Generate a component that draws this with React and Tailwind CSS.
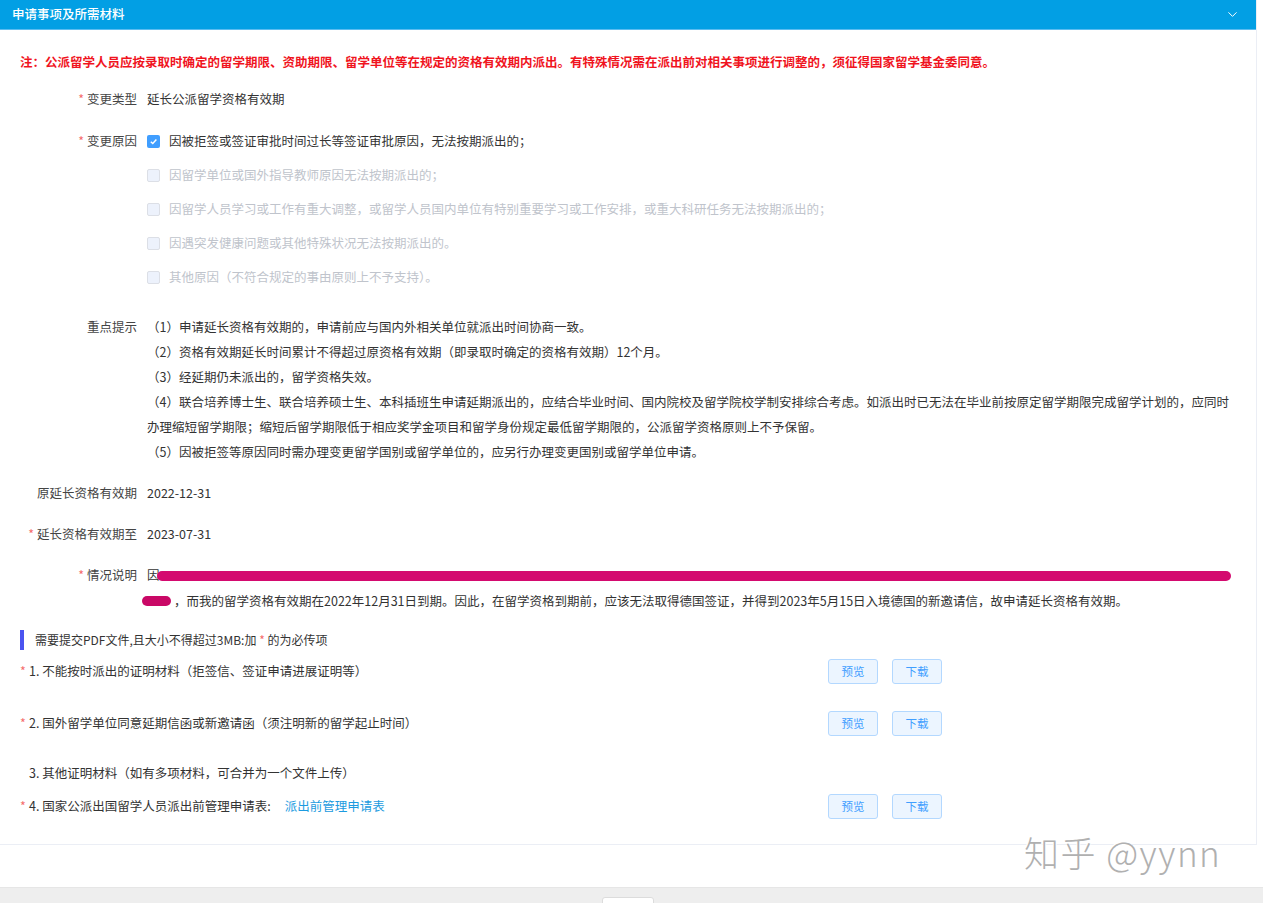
import React from "react";
import { ChevronDown } from "lucide-react";

const font = { fontFamily: '"Noto Sans CJK SC", "Noto Sans", sans-serif' };

const Star = () => <span className="text-[#f56c6c] mr-[3px]">*</span>;

const reasons = [
  { text: "因被拒签或签证审批时间过长等签证审批原因，无法按期派出的；", checked: true },
  { text: "因留学单位或国外指导教师原因无法按期派出的；" },
  { text: "因留学人员学习或工作有重大调整，或留学人员国内单位有特别重要学习或工作安排，或重大科研任务无法按期派出的；" },
  { text: "因遇突发健康问题或其他特殊状况无法按期派出的。" },
  { text: "其他原因（不符合规定的事由原则上不予支持）。" },
];

const tips = [
  "（1）申请延长资格有效期的，申请前应与国内外相关单位就派出时间协商一致。",
  "（2）资格有效期延长时间累计不得超过原资格有效期（即录取时确定的资格有效期）12个月。",
  "（3）经延期仍未派出的，留学资格失效。",
  "（4）联合培养博士生、联合培养硕士生、本科插班生申请延期派出的，应结合毕业时间、国内院校及留学院校学制安排综合考虑。如派出时已无法在毕业前按原定留学期限完成留学计划的，应同时办理缩短留学期限；缩短后留学期限低于相应奖学金项目和留学身份规定最低留学期限的，公派留学资格原则上不予保留。",
  "（5）因被拒签等原因同时需办理变更留学国别或留学单位的，应另行办理变更国别或留学单位申请。",
];

const Label = ({ required, children }) => (
  <div className="w-[137px] shrink-0 text-right text-[#444]">
    {required && <Star />}
    {children}
  </div>
);

const Checkbox = ({ checked }) =>
  checked ? (
    <span className="w-[13px] h-[13px] rounded-[2px] bg-[#409eff] flex items-center justify-center shrink-0">
      <svg width="9" height="9" viewBox="0 0 10 10">
        <path d="M2 5.2 L4.2 7.3 L8.2 2.8" fill="none" stroke="white" strokeWidth="1.6" />
      </svg>
    </span>
  ) : (
    <span className="w-[13px] h-[13px] rounded-[2px] bg-[#edf2fc] border border-[#dcdfe6] shrink-0" />
  );

const FileButtons = () => (
  <div className="flex gap-[14px]">
    {["预览", "下载"].map((t) => (
      <button
        key={t}
        className="w-[50px] h-[25px] rounded-[3px] bg-[#ecf5ff] border border-[#b3d8ff] text-[#409eff] text-[11.5px]"
      >
        {t}
      </button>
    ))}
  </div>
);

const files = [
  { required: true, text: "1. 不能按时派出的证明材料（拒签信、签证申请进展证明等）", buttons: true, mt: "mt-[9px]" },
  { required: true, text: "2. 国外留学单位同意延期信函或新邀请函（须注明新的留学起止时间）", buttons: true, mt: "mt-[27px]" },
  { required: false, text: "3. 其他证明材料（如有多项材料，可合并为一个文件上传）", mt: "mt-[25px]" },
  { required: true, text: "4. 国家公派出国留学人员派出前管理申请表:", link: "派出前管理申请表", buttons: true, mt: "mt-[8px]" },
];

export default function App() {
  return (
    <div className="relative w-[1263px] bg-white text-[12.5px] text-[#333]" style={font}>
      <div className="w-[1257px] border-r border-b border-[#ebeef5]">
        {/* Header */}
        <div className="h-[30px] bg-[#029fe4] flex items-center justify-between pl-[12px] pr-[16px] border-b border-[#5bbcf0]">
          <span className="text-white text-[12.5px] font-medium">申请事项及所需材料</span>
          <ChevronDown size={15} className="text-white" strokeWidth={1.6} />
        </div>

        <div className="pl-[20px] pr-[24px] pt-[22px] pb-[25px]">
          <div className="h-[20px] leading-[20px] text-[#f0141e] font-semibold text-[12.5px]">
            注：公派留学人员应按录取时确定的留学期限、资助期限、留学单位等在规定的资格有效期内派出。有特殊情况需在派出前对相关事项进行调整的，须征得国家留学基金委同意。
          </div>

          <div className="-ml-[20px]">
            {/* 变更类型 */}
            <div className="mt-[10px] h-[34px] flex items-center gap-[10px]">
              <Label required>变更类型</Label>
              <span>延长公派留学资格有效期</span>
            </div>

            {/* 变更原因 */}
            <div className="mt-[8px] flex gap-[10px]">
              <div className="h-[34px] flex items-center">
                <Label required>变更原因</Label>
              </div>
              <div>
                {reasons.map((r, i) => (
                  <div key={i} className="h-[34px] flex items-center gap-[9px]">
                    <Checkbox checked={r.checked} />
                    <span className={r.checked ? "text-[#333]" : "text-[#c0c4cc]"}>{r.text}</span>
                  </div>
                ))}
              </div>
            </div>

            {/* 重点提示 */}
            <div className="mt-[20px] flex gap-[10px] leading-[25px]">
              <Label>重点提示</Label>
              <div className="w-[1086px]">
                {tips.map((t, i) => (
                  <div key={i}>{t}</div>
                ))}
              </div>
            </div>

            <div className="mt-[12px] h-[34px] flex items-center gap-[10px]">
              <Label>原延长资格有效期</Label>
              <span>2022-12-31</span>
            </div>

            <div className="mt-[7px] h-[34px] flex items-center gap-[10px]">
              <Label required>延长资格有效期至</Label>
              <span>2023-07-31</span>
            </div>

            <div className="mt-[11px] flex gap-[10px] leading-[26px]">
              <Label required>情况说明</Label>
              <div className="w-[1090px]">
                <div className="flex items-center">
                  <span>因</span>
                  <span className="block w-[1074px] h-[10px] -ml-[3px] mt-[1px] rounded-full bg-[#d40a6f]" />
                </div>
                <div className="flex items-center">
                  <span className="block w-[29px] h-[10px] -ml-[5px] mr-[3px] rounded-full bg-[#c90866]" />
                  <span>，而我的留学资格有效期在2022年12月31日到期。因此，在留学资格到期前，应该无法取得德国签证，并得到2023年5月15日入境德国的新邀请信，故申请延长资格有效期。</span>
                </div>
              </div>
            </div>
          </div>

          {/* Files */}
          <div className="mt-[16px] h-[20px] flex items-center">
            <span className="w-[4px] h-[20px] bg-[#4b54f0]" />
            <span className="ml-[11px] text-[#333] text-[12px]">
              需要提交PDF文件,且大小不得超过3MB:加 <span className="text-[#f56c6c]">*</span> 的为必传项
            </span>
          </div>

          {files.map((f, i) => (
            <div key={i} className={`${f.mt} h-[25px] flex items-center`}>
              <div className="w-[808px] flex items-center">
                <span className={`w-[9px] ${f.required ? "text-[#f56c6c]" : "text-transparent"}`}>*</span>
                <span>{f.text}</span>
                {f.link && <span className="ml-[14px] text-[#1c9be0]">{f.link}</span>}
              </div>
              {f.buttons && <FileButtons />}
            </div>
          ))}
        </div>
      </div>

      <div className="h-[42px]" />
      <div className="h-[16px] bg-[#eeeeee] border-t border-[#e6e6e6] pl-[602px] pt-[9px] overflow-hidden">
        <div className="w-[52px] h-[20px] bg-white border border-[#dcdcdc] rounded-[3px]" />
      </div>

      {/* watermark */}
      <div
        className="absolute left-[1024px] top-[826px] text-[35px] font-light text-[#b0b0b0] tracking-[1.5px]"
        style={{ textShadow: "1px 1px 0 #fff, -1px -1px 0 #fff" }}
      >
        知乎 @yynn
      </div>
    </div>
  );
}
